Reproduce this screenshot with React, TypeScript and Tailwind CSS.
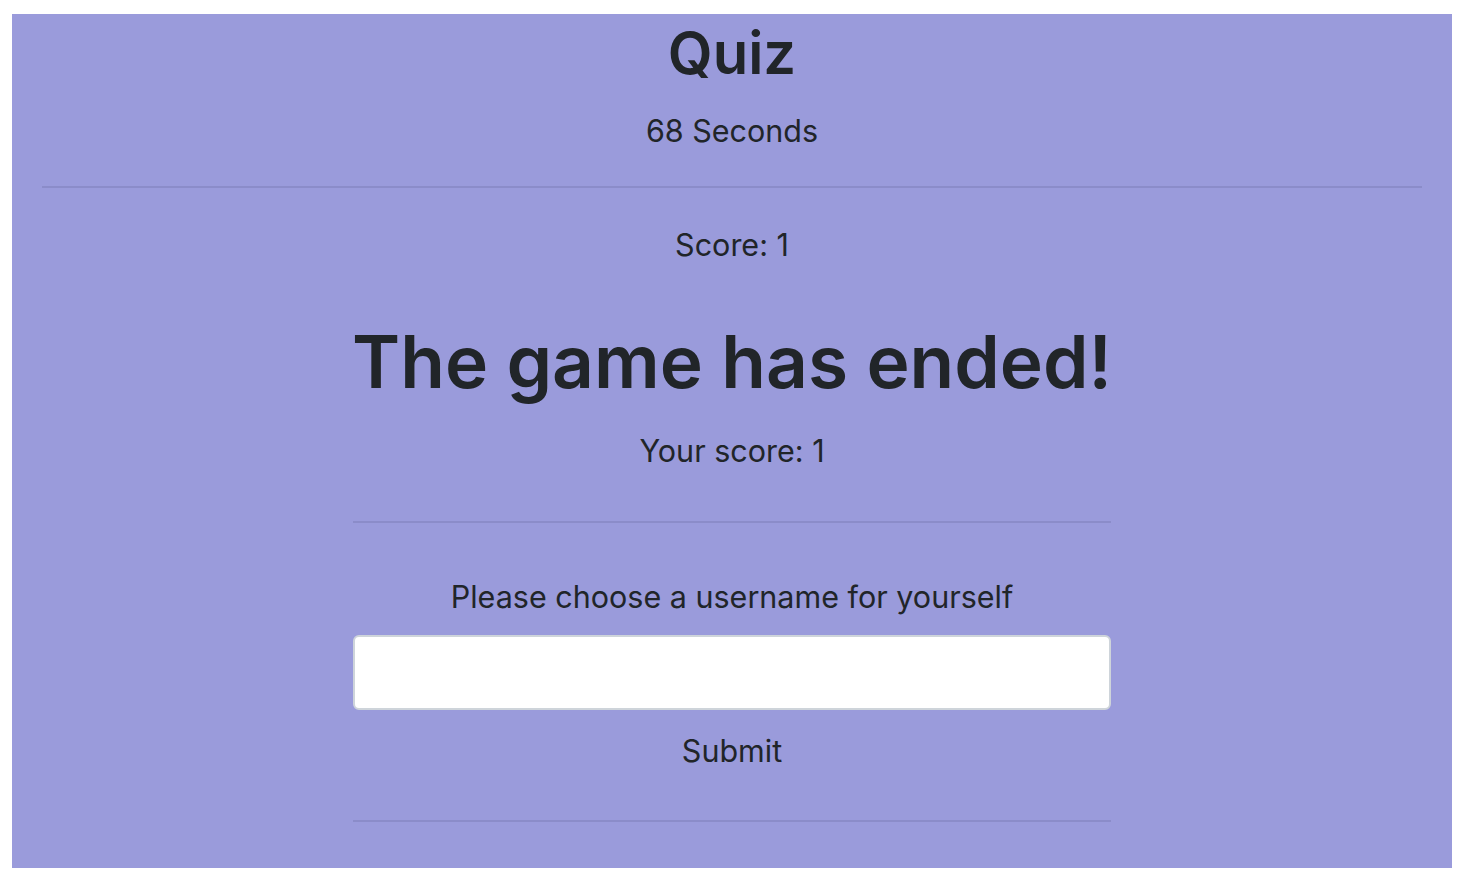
import React from 'react'

const App = () => {
  return (
    <div className="min-h-screen bg-white pt-[14px] pl-[12px] pb-6 font-['Inter',sans-serif] text-[#212529]">
      <div className="bg-[#9a9bdb] w-[1440px] h-[854px] flex flex-col items-center">
        <h1 className="mt-[3px] text-[58px] font-semibold leading-[1.25]">Quiz</h1>
        <p className="mt-[23px] text-[30.5px] leading-[1.2]">68 Seconds</p>
        <hr className="mt-[37px] w-[calc(100%-60px)] border-0 border-t-2 border-[#8b8cc9]" />
        <p className="mt-[39px] text-[30.5px] leading-[1.2]">Score: 1</p>

        <div className="w-[758px] flex flex-col items-center">
          <h2 className="mt-[53px] text-[73px] font-semibold leading-[1.22] whitespace-nowrap">The game has ended!</h2>
          <p className="mt-[27px] text-[30.5px] leading-[1.2]">Your score: 1</p>
          <hr className="mt-[52px] w-full border-0 border-t-2 border-[#8b8cc9]" />
          <label className="mt-[56px] text-[30.5px] leading-[1.2]">Please choose a username for yourself</label>
          <input
            type="text"
            className="mt-[19px] w-full h-[75px] bg-white rounded-[6px] border-2 border-[#ced4da] outline-none px-4 text-[30px]"
          />
          <button className="mt-[23px] text-[30.5px] leading-[1.2]">Submit</button>
          <hr className="mt-[50px] w-full border-0 border-t-2 border-[#8b8cc9]" />
        </div>
      </div>
    </div>
  )
}

export default App
